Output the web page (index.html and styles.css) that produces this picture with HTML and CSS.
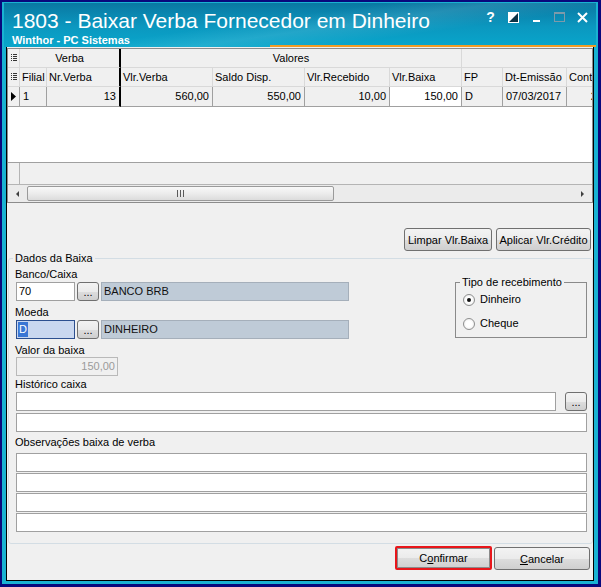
FILE: index.html
```html
<!DOCTYPE html>
<html lang="pt-BR">
<head>
    <meta charset="UTF-8">
    <meta name="viewport" content="width=device-width, initial-scale=1.0">
    <title>1803 - Baixar Verba Fornecedor em Dinheiro</title>
    <link rel="stylesheet" href="styles.css">
</head>
<body>
    <div class="window">
        <div class="titlebar">
            <div class="title-texts">
                <div class="title">1803 - Baixar Verba Fornecedor em Dinheiro</div>
                <div class="subtitle">Winthor - PC Sistemas</div>
            </div>
            <div class="title-buttons">
                <span class="tb tb-help">?</span>
                <span class="tb">
                    <svg width="11" height="11" viewBox="0 0 11 11"><rect x="0" y="0" width="11" height="11" fill="#fff"/><polygon points="10,1 10,10 1,10" fill="#0b3346"/></svg>
                </span>
                <span class="tb">
                    <svg width="7" height="11" viewBox="0 0 7 11"><rect x="0" y="8" width="7" height="2" fill="#fff"/></svg>
                </span>
                <span class="tb">
                    <svg width="11" height="11" viewBox="0 0 11 11"><rect x="0.5" y="0.5" width="10" height="9" fill="none" stroke="#7d9aaa"/><rect x="0" y="0" width="11" height="2" fill="#7d9aaa"/></svg>
                </span>
                <span class="tb">
                    <svg width="11" height="11" viewBox="0 0 11 11"><path d="M1 1 L10 10 M10 1 L1 10" stroke="#fff" stroke-width="2"/></svg>
                </span>
            </div>
        </div>

        <div class="client">
            <div class="grid">
                <div class="grid-row band">
                    <div class="ind"><svg width="6" height="8" viewBox="0 0 6 8"><path d="M0 0.5h1M2 0.5h4M0 2.5h1M2 2.5h4M0 4.5h1M2 4.5h4M0 6.5h1M2 6.5h4" stroke="#333" stroke-width="1"/></svg></div>
                    <div class="sep center">Verba</div>
                    <div class="center">Valores</div>
                    <div></div>
                </div>
                <div class="grid-row head">
                    <div class="ind"><svg width="6" height="8" viewBox="0 0 6 8"><path d="M0 0.5h1M2 0.5h4M0 2.5h1M2 2.5h4M0 4.5h1M2 4.5h4M0 6.5h1M2 6.5h4" stroke="#333" stroke-width="1"/></svg></div>
                    <div>Filial</div>
                    <div class="sep">Nr.Verba</div>
                    <div>Vlr.Verba</div>
                    <div>Saldo Disp.</div>
                    <div>Vlr.Recebido</div>
                    <div>Vlr.Baixa</div>
                    <div>FP</div>
                    <div>Dt-Emissão</div>
                    <div>Cont</div>
                </div>
                <div class="grid-row data">
                    <div class="ind"><svg width="5" height="9" viewBox="0 0 5 9"><polygon points="0,0 5,4.5 0,9" fill="#000"/></svg></div>
                    <div>1</div>
                    <div class="sep num">13</div>
                    <div class="num">560,00</div>
                    <div class="num">550,00</div>
                    <div class="num">10,00</div>
                    <div class="num edit">150,00</div>
                    <div>D</div>
                    <div>07/03/2017</div>
                    <div class="num">20</div>
                </div>
                <div class="grid-empty"></div>
                <div class="grid-footer"><div class="gf-ind"></div></div>
                <div class="hscroll">
                    <span class="sb-btn"><span class="arrow-left"></span></span>
                    <div class="thumb"><span class="grip"></span></div>
                    <span class="sb-btn right"><span class="arrow-right"></span></span>
                </div>
            </div>

            <div class="grid-actions">
                <button class="btn limpar">Limpar Vlr.Baixa</button>
                <button class="btn aplicar">Aplicar Vlr.Crédito</button>
            </div>

            <fieldset class="group dados">
                <legend>Dados da Baixa</legend>
                <div class="top-area">
                    <div class="top-left">
                        <div class="lbl first">Banco/Caixa</div>
                        <div class="lookup">
                            <div class="txt code">70</div>
                            <button class="btn dots">...</button>
                            <div class="txt desc">BANCO BRB</div>
                        </div>
                        <div class="lbl">Moeda</div>
                        <div class="lookup">
                            <div class="txt code focus"><span class="sel">D</span></div>
                            <button class="btn dots">...</button>
                            <div class="txt desc">DINHEIRO</div>
                        </div>
                        <div class="lbl">Valor da baixa</div>
                        <div class="txt valor">150,00</div>
                    </div>
                    <fieldset class="group tipo">
                        <legend>Tipo de recebimento</legend>
                        <div class="radio first"><span class="dot checked"></span>Dinheiro</div>
                        <div class="radio"><span class="dot"></span>Cheque</div>
                    </fieldset>
                </div>
                <div class="lbl hist">Histórico caixa</div>
                <div class="hist-row">
                    <div class="txt wide"></div>
                    <button class="btn dots">...</button>
                </div>
                <div class="txt full second"></div>
                <div class="lbl obs-lbl">Observações baixa de verba</div>
                <div class="obs">
                    <div class="txt full"></div>
                    <div class="txt full"></div>
                    <div class="txt full"></div>
                    <div class="txt full"></div>
                </div>
            </fieldset>

            <div class="footer">
                <button class="btn confirmar">C<u>o</u>nfirmar</button>
                <button class="btn cancelar"><u>C</u>ancelar</button>
            </div>
        </div>
    </div>
</body>
</html>
```

FILE: styles.css
```css
body {
    margin: 0;
    width: 601px;
    height: 587px;
    box-sizing: border-box;
    padding: 2px 3px 3px 2px;
    background-color: #08087c;
    font-family: "Liberation Sans", Arial, sans-serif;
    font-size: 11px;
    color: #000;
    overflow: hidden;
}
.window {
    height: 100%;
    box-sizing: border-box;
    background-color: #19b2d2;
    padding: 1px 2px 3px 2px;
    display: flex;
    flex-direction: column;
}

/* barra de titulo */
.titlebar {
    height: 44px;
    flex: none;
    box-sizing: border-box;
    padding: 6px 2px 0 8px;
    display: flex;
    justify-content: space-between;
    align-items: flex-start;
    background:
        linear-gradient(#f39c24, #f39c24) right bottom / 326px 2px no-repeat,
        linear-gradient(172deg, rgba(255,255,255,0) 42%, rgba(255,255,255,0.10) 55%, rgba(255,255,255,0) 70%),
        linear-gradient(#0a78a2, #0b98c0 55%, #08a6cb);
    color: #fff;
}
.title {
    font-size: 21px;
    line-height: 22px;
    margin-top: 1px;
}
.subtitle {
    font-size: 11px;
    font-weight: bold;
    line-height: 13px;
    margin-top: 2px;
}
.title-buttons {
    display: flex;
    margin-top: 3px;
}
.tb {
    width: 23px;
    height: 11px;
    display: flex;
    justify-content: center;
    align-items: flex-start;
}
.tb-help {
    font-weight: bold;
    font-size: 14px;
    line-height: 11px;
}

/* area cliente */
.client {
    flex: 1;
    margin: 0 2px;
    border: 1px solid #000;
    border-top: none;
    background-color: #f0f0f0;
    display: flex;
    flex-direction: column;
    min-height: 0;
}

/* grid */
.grid {
    flex: none;
    margin-top: 1px;
    height: 155px;
    box-sizing: border-box;
    border: 1px solid #8c8c8c;
    background-color: #fff;
    display: flex;
    flex-direction: column;
    overflow: hidden;
}
.grid-row {
    flex: none;
    display: grid;
    grid-template-columns: 12px 27px 74px 92px 92px 85px 72px 41px 64px 40px;
}
.grid-row.band {
    grid-template-columns: 12px 101px 341px 145px;
}
.grid-row > div {
    box-sizing: border-box;
    height: 19px;
    line-height: 18px;
    padding: 0 2px;
    white-space: nowrap;
    overflow: hidden;
    background-color: #f0f0f0;
    border-right: 1px solid #d9d9d9;
    border-bottom: 1px solid #d9d9d9;
}
.grid-row > .ind {
    padding: 0;
    display: flex;
    justify-content: center;
    align-items: center;
}
.grid-row > .sep {
    border-right: 2px solid #000;
}
.grid-row.data > div {
    height: 20px;
    line-height: 19px;
    border-color: #a0a0a0;
    padding: 0 3px;
}
.grid-row.data > .sep {
    border-right: 2px solid #000;
}
.grid-row.data > .ind {
    padding: 0;
}
.grid-row > .center {
    text-align: center;
}
.grid-row > .num {
    text-align: right;
}
.grid-row > .edit {
    background-color: #fff;
}
.grid-empty {
    flex: 1;
}
.grid-footer {
    flex: none;
    height: 22px;
    box-sizing: border-box;
    border-top: 1px solid #a0a0a0;
    background-color: #f0f0f0;
}
.gf-ind {
    width: 12px;
    height: 100%;
    box-sizing: border-box;
    border-right: 1px solid #b4b4b4;
}
.hscroll {
    flex: none;
    height: 18px;
    box-sizing: border-box;
    border-top: 1px solid #b4b4b4;
    background-color: #ebebeb;
    display: flex;
    align-items: center;
}
.sb-btn {
    width: 19px;
    height: 100%;
    display: flex;
    justify-content: center;
    align-items: center;
}
.sb-btn.right {
    margin-left: auto;
    width: 19px;
}
.arrow-left {
    width: 0;
    height: 0;
    border-top: 3px solid transparent;
    border-bottom: 3px solid transparent;
    border-right: 3px solid #404040;
}
.arrow-right {
    width: 0;
    height: 0;
    border-top: 3px solid transparent;
    border-bottom: 3px solid transparent;
    border-left: 3px solid #404040;
}
.thumb {
    width: 307px;
    height: 15px;
    box-sizing: border-box;
    border: 1px solid #9a9a9a;
    border-radius: 2px;
    background: linear-gradient(#f8f8f8, #ececec 50%, #dcdcdc);
    display: flex;
    justify-content: center;
    align-items: center;
}
.grip {
    width: 7px;
    height: 7px;
    background: repeating-linear-gradient(90deg, #5a5a5a 0, #5a5a5a 1px, transparent 1px, transparent 3px);
}

/* botoes */
.btn {
    box-sizing: border-box;
    border: 1px solid #707070;
    border-radius: 3px;
    background: linear-gradient(#f3f3f3, #ebebeb 50%, #dddddd 51%, #cfcfcf);
    font-family: "Liberation Sans", Arial, sans-serif;
    font-size: 11px;
    color: #000;
    padding: 0;
    margin: 0;
}
.grid-actions {
    flex: none;
    height: 49px;
    box-sizing: border-box;
    padding: 25px 2px 0 0;
    display: flex;
    justify-content: flex-end;
    align-items: flex-start;
    gap: 4px;
}
.grid-actions .btn {
    height: 23px;
}
.limpar {
    width: 88px;
}
.aplicar {
    width: 95px;
}

/* dados da baixa */
.group {
    margin: 0;
    min-width: 0;
}
.group > legend {
    line-height: 13px;
    padding: 0 2px;
    margin-left: -3px;
}
.dados {
    flex: none;
    margin-left: 1px;
    padding: 0 5px 11px 7px;
    border: 1px solid #d3dde4;
    border-radius: 3px;
}
.lbl {
    height: 13px;
    line-height: 13px;
    margin-top: 5px;
    margin-left: -1px;
}
.lbl.first {
    margin-top: 3px;
}
.lbl.hist {
    margin-top: 2px;
}
.lbl.obs-lbl {
    margin-top: 4px;
}
.top-area {
    display: flex;
    justify-content: space-between;
    align-items: flex-start;
}
.lookup {
    margin-top: 1px;
    display: flex;
    height: 19px;
}
.txt {
    box-sizing: border-box;
    height: 19px;
    line-height: 17px;
    border: 1px solid #a0a0a0;
    background-color: #fff;
    padding: 0 2px;
    white-space: nowrap;
}
.code {
    width: 59px;
}
.code.focus {
    border-color: #2c4f8f;
    background-color: #c9d7ef;
    padding: 0 1px;
}
.sel {
    background-color: #3a76d4;
    color: #fff;
    display: inline-block;
    line-height: 15px;
    padding: 0 1px;
}
.lookup .dots {
    margin-left: 2px;
}
.dots {
    width: 22px;
    height: 19px;
    line-height: 19px;
    font-size: 11px;
}
.desc {
    margin-left: 2px;
    width: 248px;
    background-color: #bfcbd7;
    border-color: #a5afba;
    color: #111;
}
.valor {
    width: 102px;
    text-align: right;
    background-color: #f0f0f0;
    border-color: #b9b9b9;
    color: #9b9b9b;
}
.tipo {
    width: 132px;
    box-sizing: border-box;
    margin-top: 11px;
    padding: 0 4px 7px 7px;
    border: 1px solid #8a8a8a;
}
.radio {
    display: flex;
    align-items: center;
    height: 13px;
    line-height: 13px;
    margin-top: 11px;
}
.radio.first {
    margin-top: 4px;
}
.dot {
    width: 12px;
    height: 12px;
    box-sizing: border-box;
    border: 1px solid #8e8f8f;
    border-radius: 50%;
    background: radial-gradient(circle, #fff 40%, #e4e4e4);
    margin-right: 5px;
    display: flex;
    justify-content: center;
    align-items: center;
}
.dot.checked::after {
    content: "";
    width: 4px;
    height: 4px;
    border-radius: 50%;
    background-color: #111;
}
.hist-row {
    margin-top: 1px;
    display: flex;
    justify-content: space-between;
}
.wide {
    width: 540px;
}
.full.second {
    margin-top: 2px;
}
.obs {
    margin-top: 4px;
    display: flex;
    flex-direction: column;
    gap: 1px;
}

/* rodape */
.footer {
    flex: 1;
    box-sizing: border-box;
    padding: 2px 3px 0 0;
    display: flex;
    justify-content: flex-end;
    align-items: flex-start;
    gap: 2px;
}
.confirmar {
    width: 97px;
    height: 24px;
    border: 2px solid #e8161b;
    border-radius: 2px;
    box-shadow: inset 0 0 0 1px #8a8a8a;
}
.cancelar {
    width: 96px;
    height: 23px;
    margin-top: 1px;
}
```
